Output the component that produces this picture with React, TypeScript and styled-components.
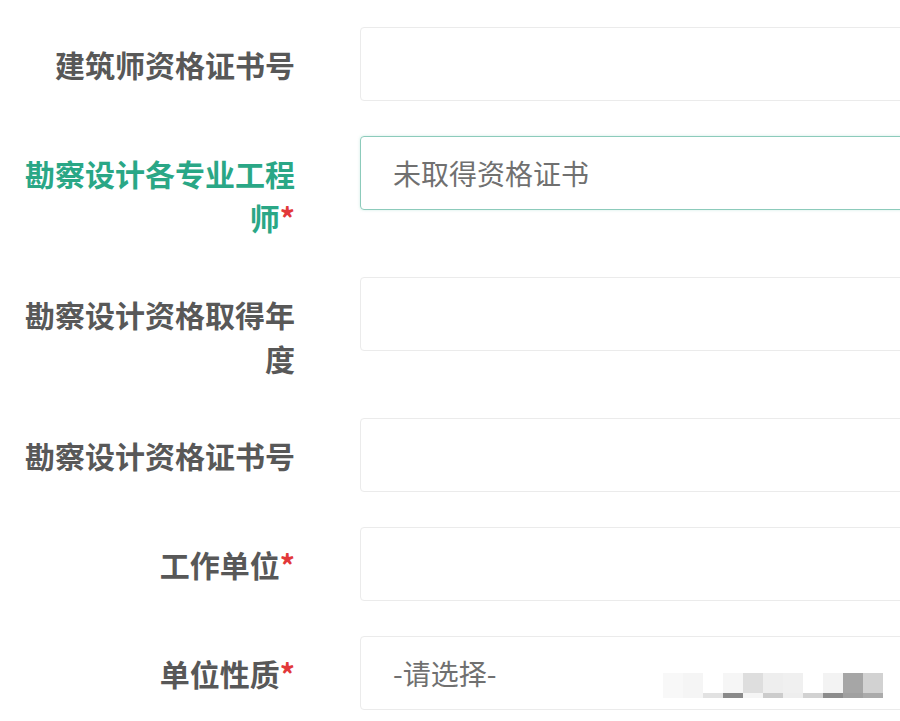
import React from "react";
import styled, { createGlobalStyle } from "styled-components";

const GlobalStyle = createGlobalStyle`
  html, body {
    margin: 0;
    padding: 0;
    background: #ffffff;
    overflow: hidden;
  }
  body {
    font-family: "Noto Sans CJK SC", "Noto Sans", sans-serif;
  }
`;

const Form = styled.section`
  padding: 27px 0 0 15px;
  width: 900px;
  box-sizing: border-box;
  overflow: hidden;
`;

const Row = styled.div`
  display: flex;
  align-items: flex-start;
  gap: 65px;
  margin-bottom: 35px;
`;

const Label = styled.label<{ active?: boolean }>`
  flex-shrink: 0;
  width: 280px;
  padding: 15px 0 3px;
  line-height: 44px;
  font-size: 30px;
  font-weight: 700;
  text-align: right;
  color: ${(p) => (p.active ? "#2aa786" : "#585858")};
`;

const Star = styled.span`
  color: #e2383a;
`;

const Field = styled.div<{ active?: boolean }>`
  flex: 1;
  position: relative;
  height: 74px;
  margin-right: -40px;
  box-sizing: border-box;
  display: flex;
  align-items: center;
  padding-left: 32px;
  border: 1px solid ${(p) => (p.active ? "#8ccbbb" : "#ebebeb")};
  border-radius: 4px;
  box-shadow: ${(p) => (p.active ? "0 0 3px rgba(120, 200, 180, 0.35)" : "none")};
  font-size: 28px;
  color: #707070;
`;

const Mark = styled.svg`
  position: absolute;
  left: 302px;
  top: 36px;
`;

interface FormRow {
  label: string;
  required?: boolean;
  active?: boolean;
  value?: string;
  mark?: boolean;
}

const rows: FormRow[] = [
  { label: "建筑师资格证书号" },
  { label: "勘察设计各专业工程师", required: true, active: true, value: "未取得资格证书" },
  { label: "勘察设计资格取得年度" },
  { label: "勘察设计资格证书号" },
  { label: "工作单位", required: true },
  { label: "单位性质", required: true, value: "-请选择-", mark: true },
];

// blurred watermark blocks: [top shade, bottom strip shade]
const blocks = [
  ["#f8f8f8", "#f8f8f8"],
  ["#f5f5f5", "#f5f5f5"],
  ["#ffffff", "#e2e2e2"],
  ["#f6f6f6", "#8a8a8a"],
  ["#dedede", "#f5f5f5"],
  ["#eeeeee", "#cccccc"],
  ["#f0f0f0", "#eeeeee"],
  ["#ffffff", "#d2d2d2"],
  ["#f3f3f3", "#8c8c8c"],
  ["#a6a6a6", "#a0a0a0"],
  ["#d2d2d2", "#ababab"],
];

const Watermark = () => (
  <Mark width={220} height={26} viewBox="0 0 220 26">
    {blocks.map((b, i) => (
      <g key={i}>
        <rect x={i * 20} y={0} width={20} height={20} fill={b[0]} />
        <rect x={i * 20} y={20} width={20} height={5} fill={b[1]} />
      </g>
    ))}
  </Mark>
);

export default function App() {
  return (
    <>
      <GlobalStyle />
      <Form>
        {rows.map((r, i) => (
          <Row key={i}>
            <Label active={r.active}>
              {r.label}
              {r.required && <Star>*</Star>}
            </Label>
            <Field active={r.active}>
              {r.value}
              {r.mark && <Watermark />}
            </Field>
          </Row>
        ))}
      </Form>
    </>
  );
}
